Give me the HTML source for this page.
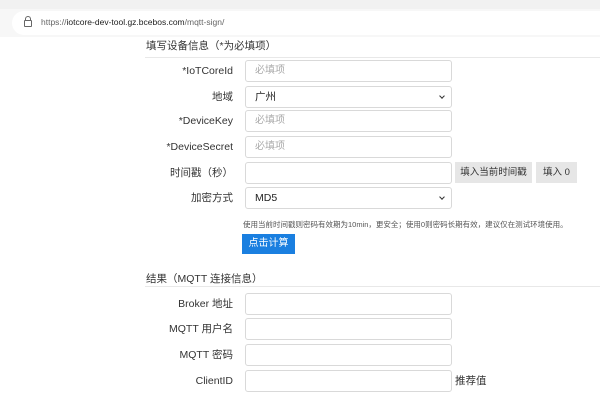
<!DOCTYPE html>
<html><head><meta charset="utf-8"><style>
body{margin:0;width:600px;height:404px;background:#fff;position:relative;overflow:hidden;font-family:"Liberation Sans","Noto Sans CJK SC",sans-serif;color:#333}
.a{position:absolute}
.lbl{position:absolute;right:367px;font-size:10.5px;color:#333;text-align:right;white-space:nowrap;line-height:22px}
.in{position:absolute;left:245px;width:207px;height:22px;border:1px solid #d9d9d9;border-radius:3px;background:#fff;box-sizing:border-box;font-size:10px;color:#aaa;padding-left:9px;line-height:20px}
.sel{color:#222;font-size:10.5px}
.sel:after{content:"";position:absolute;right:7px;top:7px;width:3px;height:3px;border-right:1.3px solid #333;border-bottom:1.3px solid #333;transform:rotate(45deg)}
.btn{position:absolute;background:#e6e6e6;font-size:9.5px;color:#333;text-align:center;line-height:21px;height:21px}
</style></head><body>
<div class="a" style="left:0;top:0;width:600px;height:9px;background:#f1f1f1"></div>
<div class="a" style="left:0;top:9px;width:600px;height:28px;background:#f7f7f7"></div>
<div class="a" style="left:12px;top:11px;width:600px;height:24px;background:#fff;border-radius:12px"></div>
<div class="a" style="left:24px;top:20px;width:6px;height:5px;border:1px solid #666;border-radius:1px"></div>
<div class="a" style="left:25px;top:16px;width:4px;height:4px;border:1px solid #666;border-bottom:none;border-radius:3px 3px 0 0"></div>
<div class="a" style="left:41px;top:17px;font-size:8.5px;color:#666;white-space:nowrap">https://<span style="color:#222">iotcore-dev-tool.gz.bcebos.com</span>/mqtt-sign/</div>
<div class="a" style="left:146px;top:38px;font-size:10.5px;color:#333;white-space:nowrap">填写设备信息（*为必填项）</div>
<div class="a" style="left:145px;top:57px;width:455px;height:1px;background:#e8e8e8"></div>
<div class="lbl" style="top:60px">*IoTCoreId</div><div class="in" style="top:60px">必填项</div>
<div class="lbl" style="top:86px">地域</div><div class="in sel" style="top:86px">广州</div>
<div class="lbl" style="top:110px">*DeviceKey</div><div class="in" style="top:110px">必填项</div>
<div class="lbl" style="top:136px">*DeviceSecret</div><div class="in" style="top:136px">必填项</div>
<div class="lbl" style="top:162px">时间戳（秒）</div><div class="in" style="top:162px"></div>
<div class="btn" style="left:455px;top:162px;width:77px">填入当前时间戳</div>
<div class="btn" style="left:536px;top:162px;width:41px">填入 0</div>
<div class="lbl" style="top:187px">加密方式</div><div class="in sel" style="top:187px">MD5</div>
<div class="a" style="left:243px;top:219px;font-size:7.5px;color:#555;white-space:nowrap">使用当前时间戳则密码有效期为10min，更安全；使用0则密码长期有效，建议仅在测试环境使用。</div>
<div class="a" style="left:242px;top:234px;width:53px;height:20px;background:#1a7fe0;color:#fff;font-size:10px;text-align:center;line-height:20px">点击计算</div>
<div class="a" style="left:146px;top:271px;font-size:10.5px;color:#333;white-space:nowrap">结果（MQTT 连接信息）</div>
<div class="a" style="left:145px;top:286px;width:455px;height:1px;background:#e8e8e8"></div>
<div class="lbl" style="top:293px">Broker 地址</div><div class="in" style="top:293px"></div>
<div class="lbl" style="top:318px">MQTT 用户名</div><div class="in" style="top:318px"></div>
<div class="lbl" style="top:344px">MQTT 密码</div><div class="in" style="top:344px"></div>
<div class="lbl" style="top:370px">ClientID</div><div class="in" style="top:370px"></div>
<div class="a" style="left:455px;top:370px;font-size:10.5px;color:#333;line-height:22px">推荐值</div>
</body></html>
